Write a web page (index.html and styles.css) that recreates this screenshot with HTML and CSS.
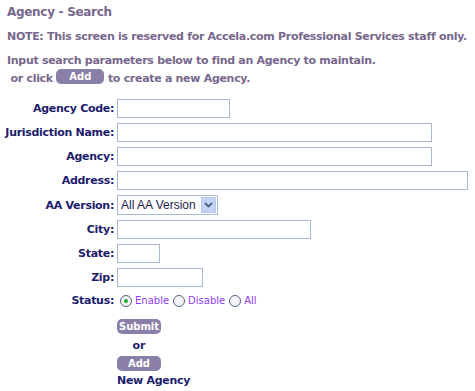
FILE: index.html
```html
<!DOCTYPE html>
<html lang="en">
<head>
    <meta charset="UTF-8">
    <link rel="stylesheet" href="styles.css">
    <title>Agency - Search</title>
</head>
<body>
    <h1 class="page-title">Agency - Search</h1>
    <p class="note">NOTE: This screen is reserved for Accela.com Professional Services staff only.</p>
    <p class="intro">Input search parameters below to find an Agency to maintain.<br>
        &nbsp;or click <button type="button" class="pill pill-wide">Add</button> to create a new Agency.</p>

    <form class="search-form">
        <label class="field-label" for="agency-code">Agency Code:</label>
        <div class="field"><input type="text" id="agency-code" class="text-input w-code"></div>

        <label class="field-label" for="jurisdiction">Jurisdiction Name:</label>
        <div class="field"><input type="text" id="jurisdiction" class="text-input w-long"></div>

        <label class="field-label" for="agency">Agency:</label>
        <div class="field"><input type="text" id="agency" class="text-input w-long"></div>

        <label class="field-label" for="address">Address:</label>
        <div class="field"><input type="text" id="address" class="text-input w-address"></div>

        <label class="field-label" for="aa-version">AA Version:</label>
        <div class="field">
            <div class="select-box">
                <span class="select-text">All AA Version</span>
                <span class="select-arrow">
                    <svg width="9" height="6" viewBox="0 0 9 6"><path d="M1 1 L4.5 4.5 L8 1" fill="none" stroke="#4d6185" stroke-width="1.8"/></svg>
                </span>
            </div>
        </div>

        <label class="field-label" for="city">City:</label>
        <div class="field"><input type="text" id="city" class="text-input w-city"></div>

        <label class="field-label" for="state">State:</label>
        <div class="field"><input type="text" id="state" class="text-input w-state"></div>

        <label class="field-label" for="zip">Zip:</label>
        <div class="field"><input type="text" id="zip" class="text-input w-zip"></div>

        <span class="field-label status-label">Status:</span>
        <div class="field status-options">
            <span class="radio-opt"><span class="radio checked"></span>Enable</span>
            <span class="radio-opt"><span class="radio"></span>Disable</span>
            <span class="radio-opt"><span class="radio"></span>All</span>
        </div>

        <span></span>
        <div class="actions">
            <button type="button" class="pill">Submit</button>
            <span class="or-text">or</span>
            <button type="button" class="pill">Add</button>
            <span class="new-agency">New Agency</span>
        </div>
    </form>
</body>
</html>
```

FILE: styles.css
```css
body {
    margin: 0;
    padding: 5px 7px;
    font-family: "DejaVu Sans", Verdana, sans-serif;
    font-size: 11px;
    background-color: #ffffff;
    color: #1c1c6b;
}

.page-title {
    margin: 0;
    font-size: 12px;
    font-weight: bold;
    color: #77678c;
    line-height: 15px;
    letter-spacing: -0.3px;
}

.note, .intro {
    margin: 9px 0 0 0;
    font-weight: bold;
    color: #77678c;
    line-height: 15px;
    letter-spacing: -0.3px;
    white-space: nowrap;
}

.intro {
    margin-top: 8px;
    line-height: 17px;
}

.pill {
    font-family: inherit;
    font-size: 10px;
    font-weight: bold;
    color: #ffffff;
    background-color: #8a7fa6;
    border: none;
    border-radius: 5px;
    padding: 0;
    width: 44px;
    height: 15px;
    line-height: 15px;
    letter-spacing: 0;
    cursor: pointer;
}

.pill-wide {
    width: 48px;
    vertical-align: 2px;
}

.search-form {
    display: grid;
    grid-template-columns: 110px auto;
    column-gap: 3px;
    row-gap: 5px;
    margin-top: 12px;
    margin-left: -3px;
}

.field-label {
    text-align: right;
    font-weight: bold;
    color: #1c1c6b;
    align-self: center;
    white-space: nowrap;
    letter-spacing: -0.3px;
}

.field {
    display: flex;
    align-items: center;
}

.text-input {
    box-sizing: border-box;
    height: 19px;
    border: 1px solid #a7bad2;
    padding: 0 2px;
    margin: 0;
    font-family: inherit;
    font-size: 11px;
}

.w-code { width: 113px; }
.w-long { width: 315px; }
.w-address { width: 351px; }
.w-city { width: 194px; }
.w-state { width: 43px; }
.w-zip { width: 86px; }

.select-box {
    box-sizing: border-box;
    width: 101px;
    height: 20px;
    border: 1px solid #a7bad2;
    display: flex;
    align-items: center;
    justify-content: space-between;
    padding: 1px 1px 1px 3px;
    font-family: "Liberation Sans", Arial, sans-serif;
    font-size: 12px;
    color: #1c1c4b;
}

.select-arrow {
    width: 15px;
    height: 16px;
    background-color: #c3d3f3;
    border: 1px solid #b4c6ea;
    box-sizing: border-box;
    display: flex;
    align-items: center;
    justify-content: center;
}

.status-label {
    margin-top: 2px;
}

.status-options {
    margin-top: 2px;
    margin-left: 3px;
    gap: 4px;
    color: #8f3bf0;
    font-size: 10px;
}

.radio-opt {
    display: inline-flex;
    align-items: center;
    gap: 3px;
}

.radio {
    box-sizing: border-box;
    width: 12px;
    height: 12px;
    border: 1px solid #4f6384;
    border-radius: 50%;
    background: #f4f4f4;
    display: inline-flex;
    align-items: center;
    justify-content: center;
}

.radio.checked::after {
    content: "";
    width: 4px;
    height: 4px;
    border-radius: 50%;
    background-color: #22aa33;
}

.actions {
    display: flex;
    flex-direction: column;
    align-items: flex-start;
    margin-top: 7px;
}

.or-text {
    font-weight: bold;
    width: 44px;
    text-align: center;
    margin: 4px 0 3px;
    line-height: 15px;
}

.new-agency {
    font-weight: bold;
    line-height: 15px;
    margin-top: 2px;
    letter-spacing: -0.3px;
}
```
